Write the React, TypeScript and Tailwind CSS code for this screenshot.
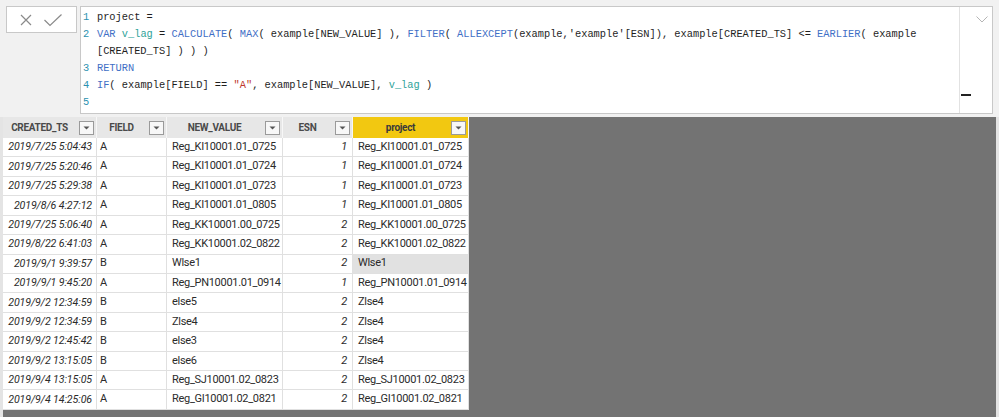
import React from "react";

const rows: [string, string, string, string, string][] = [
  ["2019/7/25 5:04:43", "A", "Reg_KI10001.01_0725", "1", "Reg_KI10001.01_0725"],
  ["2019/7/25 5:20:46", "A", "Reg_KI10001.01_0724", "1", "Reg_KI10001.01_0724"],
  ["2019/7/25 5:29:38", "A", "Reg_KI10001.01_0723", "1", "Reg_KI10001.01_0723"],
  ["2019/8/6 4:27:12", "A", "Reg_KI10001.01_0805", "1", "Reg_KI10001.01_0805"],
  ["2019/7/25 5:06:40", "A", "Reg_KK10001.00_0725", "2", "Reg_KK10001.00_0725"],
  ["2019/8/22 6:41:03", "A", "Reg_KK10001.02_0822", "2", "Reg_KK10001.02_0822"],
  ["2019/9/1 9:39:57", "B", "Wlse1", "2", "Wlse1"],
  ["2019/9/1 9:45:20", "A", "Reg_PN10001.01_0914", "1", "Reg_PN10001.01_0914"],
  ["2019/9/2 12:34:59", "B", "else5", "2", "Zlse4"],
  ["2019/9/2 12:34:59", "B", "Zlse4", "2", "Zlse4"],
  ["2019/9/2 12:45:42", "B", "else3", "2", "Zlse4"],
  ["2019/9/2 13:15:05", "B", "else6", "2", "Zlse4"],
  ["2019/9/4 13:15:05", "A", "Reg_SJ10001.02_0823", "2", "Reg_SJ10001.02_0823"],
  ["2019/9/4 14:25:06", "A", "Reg_GI10001.02_0821", "2", "Reg_GI10001.02_0821"],
];

const K = "text-[#3f6fc6]";
const V = "text-[#2fa39a]";

function DropBtn() {
  return (
    <div className="w-[15px] h-[14px] border border-[#9a9a9a] bg-[#f7f7f7] flex items-center justify-center shrink-0 mr-[2px]">
      <svg width="7" height="4" viewBox="0 0 7 4">
        <path d="M0.5 0.5 L6.5 0.5 L3.5 3.5 Z" fill="#555" />
      </svg>
    </div>
  );
}

function HeadCell({ label, w, yellow }: { label: string; w: string; yellow?: boolean }) {
  return (
    <div
      className={`${w} h-full flex items-center border-r border-[#f7f7f7] ${
        yellow ? "bg-[#f2c811] text-[#3a3a3a]" : "bg-[#e7e7e7] text-[#4a4a4a]"
      }`}
    >
      <div className="flex-1 text-center font-bold text-[10px] tracking-[-0.3px] pr-[3px] whitespace-nowrap">
        {label}
      </div>
      <DropBtn />
    </div>
  );
}

export default function App() {
  return (
    <div
      className="w-[999px] h-[417px] overflow-hidden bg-[#f1f1f1] flex flex-col"
      style={{ fontFamily: 'Roboto, "Open Sans", sans-serif' }}
    >
      {/* Formula bar */}
      <div className="h-[117px] shrink-0 flex items-start pt-[6px] pl-[6px] pr-[6px] gap-[3px] bg-[#f1f1f1]">
        <div className="w-[71px] h-[27px] bg-white border border-[#c8c8c8] flex items-center">
          <svg width="14" height="14" viewBox="0 0 14 14" className="ml-[12px]">
            <path d="M2 2 L12 12 M12 2 L2 12" stroke="#8a8a8a" strokeWidth="1.2" fill="none" />
          </svg>
          <svg width="20" height="14" viewBox="0 0 20 14" className="ml-[10px]">
            <path d="M1.5 7 L7 12.5 L18.5 1.5" stroke="#8a8a8a" strokeWidth="1.2" fill="none" />
          </svg>
        </div>
        <div className="w-[914px] h-[108px] bg-white border border-[#c8c8c8] flex">
          <div
            className="flex-1 pt-[2px] text-[10.35px] leading-[17px] text-[#1e1e1e] whitespace-pre"
            style={{ fontFamily: '"Liberation Mono", "DejaVu Sans Mono", monospace' }}
          >
            <div className="flex">
              <span className="w-[16px] pl-[2px] text-[#2b91af]">1</span>
              <span>project =</span>
            </div>
            <div className="flex">
              <span className="w-[16px] pl-[2px] text-[#2b91af]">2</span>
              <span>
                <span className={K}>VAR</span> <span className={V}>v_lag</span> ={" "}
                <span className={K}>CALCULATE</span>( <span className={K}>MAX</span>( example[NEW_VALUE] ),{" "}
                <span className={K}>FILTER</span>( <span className={K}>ALLEXCEPT</span>(example,'example'[ESN]),
                example[CREATED_TS] &lt;= <span className={K}>EARLIER</span>( example
              </span>
            </div>
            <div className="flex">
              <span className="w-[16px]"></span>
              <span>[CREATED_TS] ) ) )</span>
            </div>
            <div className="flex">
              <span className="w-[16px] pl-[2px] text-[#2b91af]">3</span>
              <span className={K}>RETURN</span>
            </div>
            <div className="flex">
              <span className="w-[16px] pl-[2px] text-[#2b91af]">4</span>
              <span>
                <span className={K}>IF</span>( example[FIELD] == <span className="text-[#c0392b]">"A"</span>,
                example[NEW_VALUE], <span className={V}>v_lag</span> )
              </span>
            </div>
            <div className="flex">
              <span className="w-[16px] pl-[2px] text-[#2b91af]">5</span>
              <span></span>
            </div>
          </div>
          <div className="w-[33px] h-full border-l border-[#e2e2e2] relative">
            <svg width="12" height="7" viewBox="0 0 12 7" className="absolute left-[16px] top-[9px]">
              <path d="M0.5 0.5 L6 6 L11.5 0.5" stroke="#b5b5b5" strokeWidth="1" fill="none" />
            </svg>
            <div className="absolute left-[1px] top-[87px] w-[10px] h-[2px] bg-[#222]" />
          </div>
        </div>
      </div>

      {/* Data view */}
      <div className="flex-1 flex items-start bg-[#737373]">
        <div className="w-[3px] h-full bg-[#e4e4e4]" />
        <div className="w-[466px] flex flex-col bg-white">
          <div className="h-[21px] flex">
            <HeadCell label="CREATED_TS" w="w-[94px]" />
            <HeadCell label="FIELD" w="w-[70px]" />
            <HeadCell label="NEW_VALUE" w="w-[116px]" />
            <HeadCell label="ESN" w="w-[70px]" />
            <HeadCell label="project" w="w-[116px]" yellow />
          </div>
          {rows.map((r, i) => (
            <div
              key={i}
              className="h-[19.43px] flex text-[11px] tracking-[-0.3px] text-[#2b2b2b] whitespace-nowrap"
            >
              <div className="w-[94px] h-full border-r border-b border-[#e0e0e0] flex items-center justify-end pr-[4px] italic text-[10.6px] tracking-[-0.1px]">
                {r[0]}
              </div>
              <div className="w-[70px] h-full border-r border-b border-[#e0e0e0] flex items-center pl-[3px]">
                {r[1]}
              </div>
              <div className="w-[116px] h-full border-r border-b border-[#e0e0e0] flex items-center pl-[5px]">
                {r[2]}
              </div>
              <div className="w-[70px] h-full border-r border-b border-[#e0e0e0] flex items-center justify-end pr-[5px] italic">
                {r[3]}
              </div>
              <div
                className={`w-[116px] h-full border-r border-b border-[#e0e0e0] flex items-center pl-[5px] ${
                  r[4] === "Wlse1" ? "bg-[#e1e1e1]" : ""
                }`}
              >
                {r[4]}
              </div>
            </div>
          ))}
        </div>
        <div className="flex-1" />
        <div className="w-[3px] h-full bg-[#e4e4e4]" />
      </div>
    </div>
  );
}
